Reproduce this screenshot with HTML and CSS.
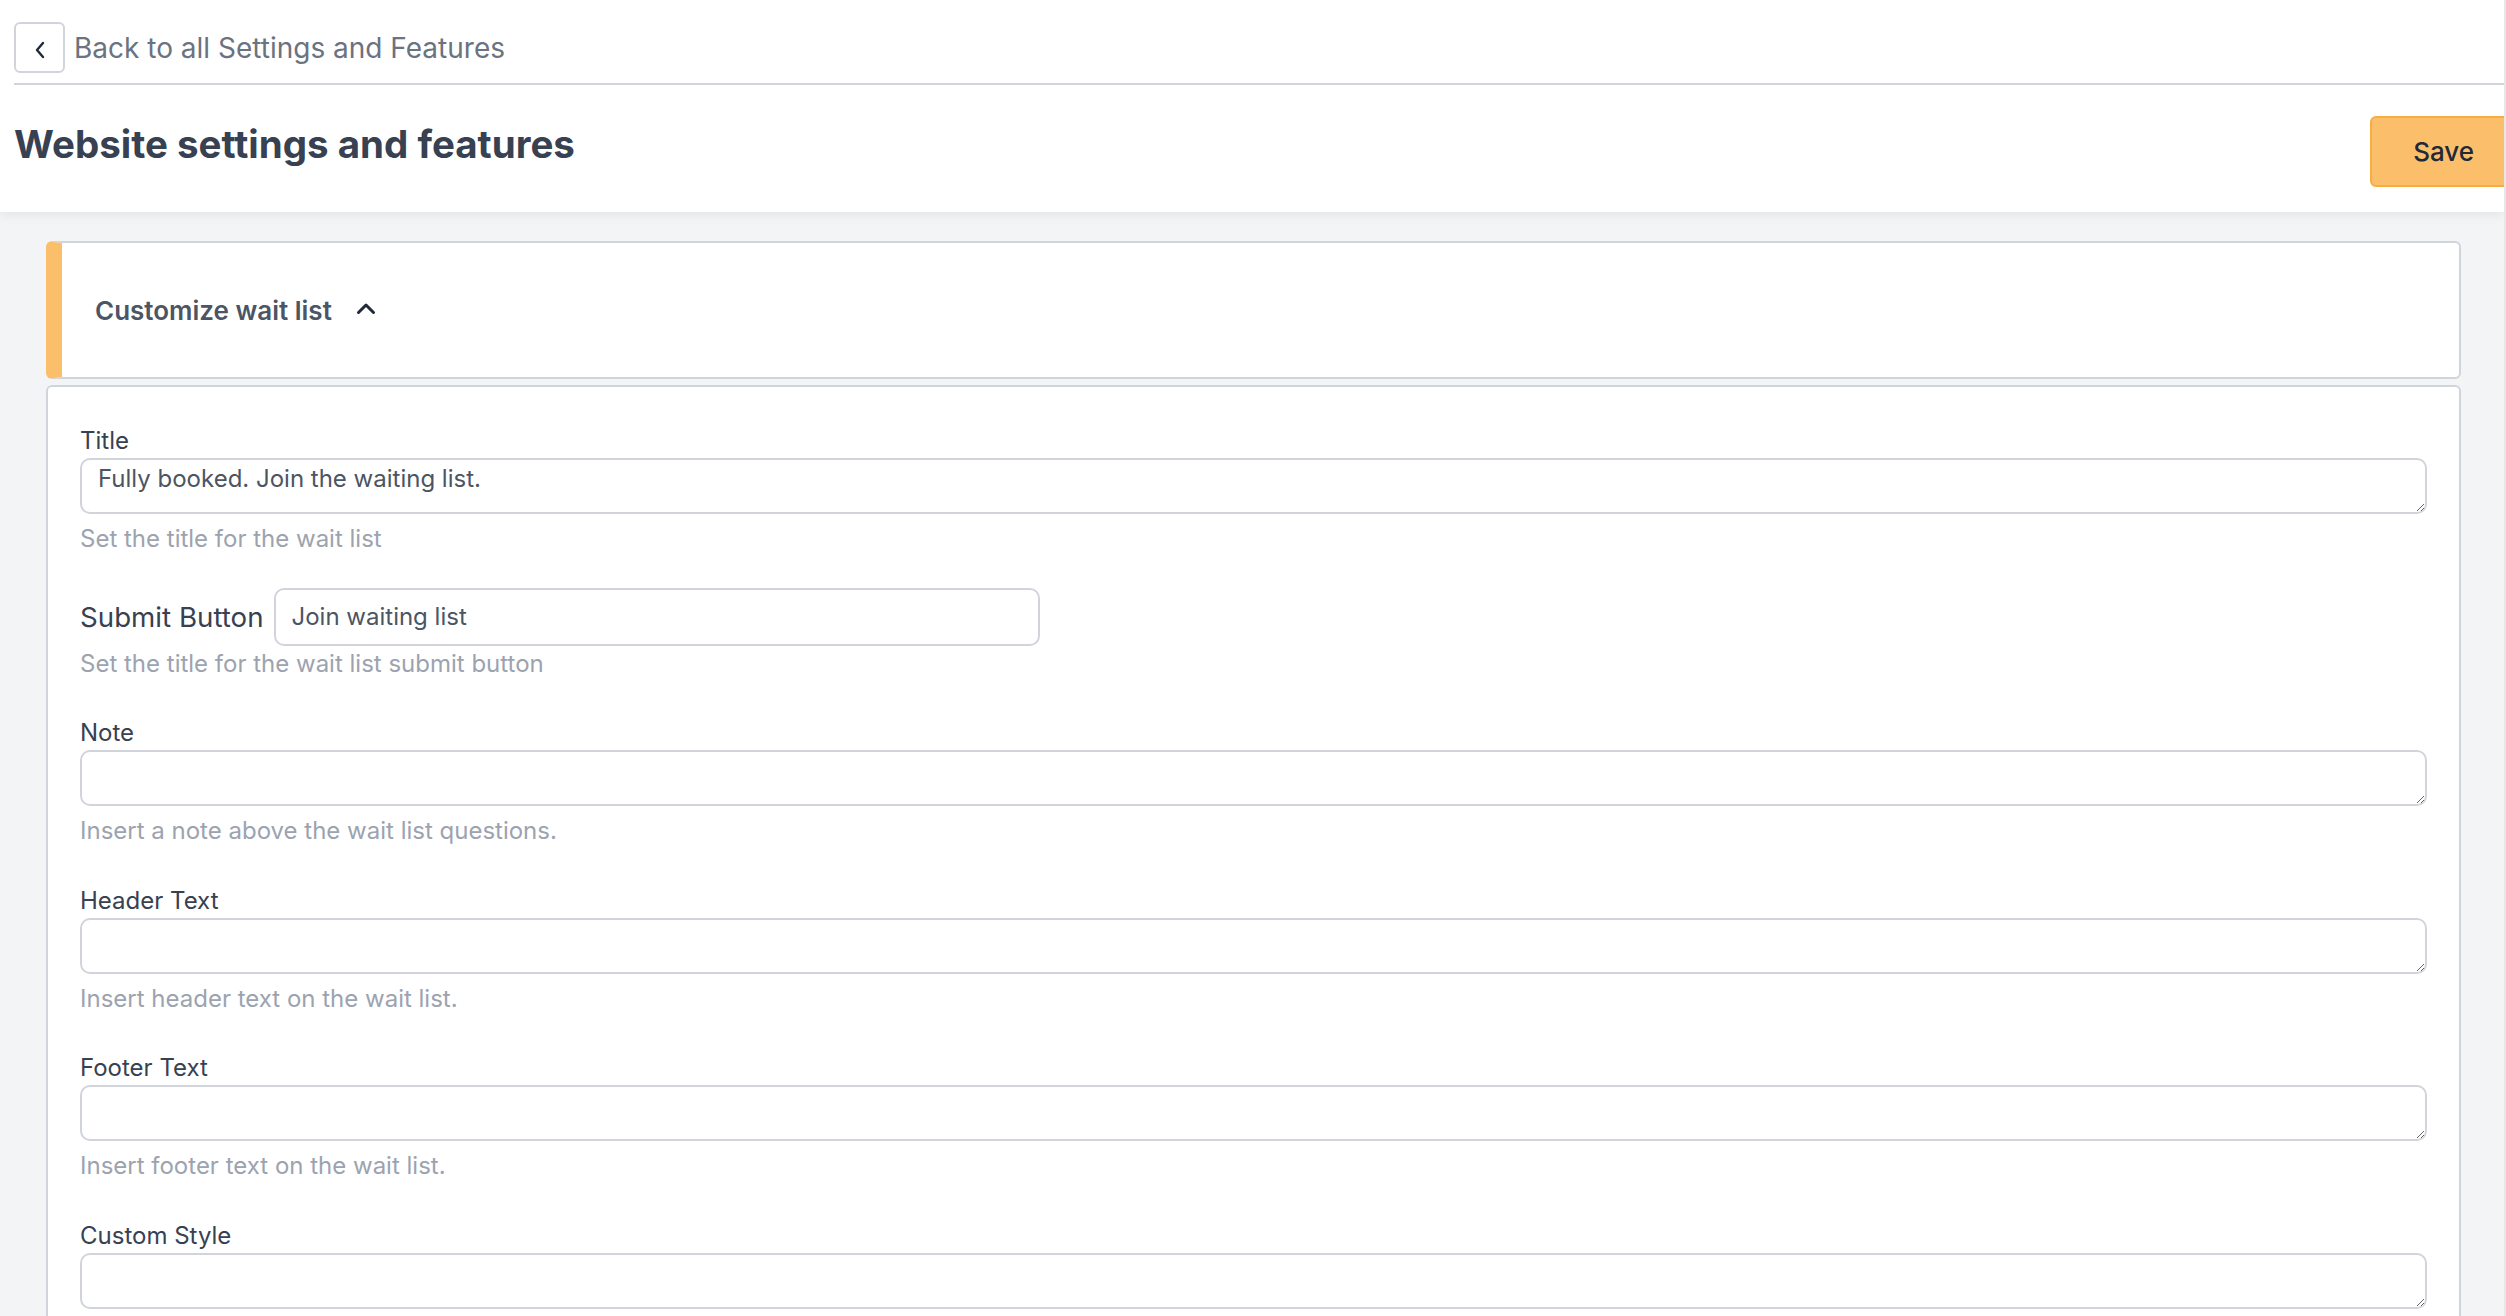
FILE: index.html
```html
<!DOCTYPE html>
<html lang="en">

<head>
  <meta charset="UTF-8">
  <meta name="viewport" content="width=device-width, initial-scale=1.0">
  <link rel="stylesheet" href="styles.css">
  <title>Website settings and features</title>
</head>

<body>
  <header class="topbar">
    <nav class="back-nav">
      <a class="back-btn" href="#">
        <svg width="12" height="18" viewBox="0 0 12 18">
          <path d="M9 2 L3 9 L9 16" fill="none" stroke="#1f2937" stroke-width="2.4" stroke-linecap="round" stroke-linejoin="round" />
        </svg>
      </a>
      <a class="back-link" href="#">Back to all Settings and Features</a>
    </nav>
    <div class="title-row">
      <h1>Website settings and features</h1>
      <button type="button" class="save-btn">Save</button>
    </div>
  </header>

  <main class="content">
    <!-- Wait list panel -->
    <section class="panel">
      <div class="panel-head">
        <h2>Customize wait list</h2>
        <svg width="20" height="13" viewBox="0 0 20 13">
          <path d="M2.5 10.5 L10 3 L17.5 10.5" fill="none" stroke="#1f2937" stroke-width="3" stroke-linecap="round" stroke-linejoin="round" />
        </svg>
      </div>

      <form class="panel-body">
        <div class="field field-tight">
          <label for="wl-title">Title</label>
          <textarea id="wl-title" name="wl-title">Fully booked. Join the waiting list.</textarea>
          <p class="help">Set the title for the wait list</p>
        </div>

        <div class="field">
          <div class="inline-row">
            <label for="wl-submit">Submit Button</label>
            <input type="text" id="wl-submit" name="wl-submit" value="Join waiting list">
          </div>
          <p class="help help-flush">Set the title for the wait list submit button</p>
        </div>

        <div class="field">
          <label for="wl-note">Note</label>
          <textarea id="wl-note" name="wl-note"></textarea>
          <p class="help">Insert a note above the wait list questions.</p>
        </div>

        <div class="field">
          <label for="wl-header">Header Text</label>
          <textarea id="wl-header" name="wl-header"></textarea>
          <p class="help">Insert header text on the wait list.</p>
        </div>

        <div class="field">
          <label for="wl-footer">Footer Text</label>
          <textarea id="wl-footer" name="wl-footer"></textarea>
          <p class="help">Insert footer text on the wait list.</p>
        </div>

        <div class="field">
          <label for="wl-style">Custom Style</label>
          <textarea id="wl-style" name="wl-style"></textarea>
        </div>
      </form>
    </section>
  </main>
</body>

</html>
```

FILE: styles.css
```css
html {
  overflow: hidden;
}

body {
  font-family: "Inter", "Noto Sans", sans-serif;
  background-color: #f3f4f6;
  margin: 0;
  padding: 0;
  border-right: 2px solid #e5e7eb;
}

/* Top header */
.topbar {
  position: relative;
  z-index: 1;
  background-color: #ffffff;
  padding-left: 14px;
  overflow: hidden;
  box-shadow: 0 4px 10px rgba(0, 0, 0, 0.06);
}

.back-nav {
  display: flex;
  align-items: center;
  gap: 9px;
  padding: 22px 0 10px;
  border-bottom: 2px solid #d1d5db;
}

.back-btn {
  width: 51px;
  height: 51px;
  box-sizing: border-box;
  border: 2px solid #d1d5db;
  border-radius: 6px;
  display: flex;
  align-items: center;
  justify-content: center;
}

.back-btn svg {
  margin-top: 5px;
  margin-left: 1px;
}

.back-link {
  font-size: 28px;
  line-height: 34px;
  color: #6b7280;
  text-decoration: none;
}

.title-row {
  display: flex;
  justify-content: space-between;
  align-items: flex-start;
  padding: 31px 0 25px;
}

.title-row h1 {
  margin: 4px 0 0;
  font-size: 38.5px;
  line-height: 48px;
  font-weight: 700;
  color: #374151;
}

.save-btn {
  height: 71px;
  padding: 0 41px;
  margin-right: -13px;
  background-color: #fbbe6b;
  border: 2px solid #f8ad3c;
  border-radius: 6px;
  font-family: inherit;
  font-size: 26px;
  font-weight: 500;
  color: #1f2937;
  cursor: pointer;
}

/* Main area */
.content {
  padding: 29px 43px 0 46px;
}

.panel-head {
  height: 138px;
  box-sizing: border-box;
  display: flex;
  align-items: center;
  gap: 24px;
  padding-left: 33px;
  background-color: #ffffff;
  border: 2px solid #d1d5db;
  border-left: 16px solid #fbbe6b;
  border-radius: 6px;
}

.panel-head h2 {
  margin: 0;
  font-size: 26px;
  font-weight: 600;
  color: #4b5563;
}

.panel-head svg {
  margin-top: -4px;
}

.panel-body {
  margin-top: 6px;
  background-color: #ffffff;
  border: 2px solid #d1d5db;
  border-radius: 6px;
  padding: 36.5px 32px 40px;
}

.field {
  margin-bottom: 34.5px;
}

.field-tight {
  margin-bottom: 31px;
}

.field label {
  display: block;
  font-size: 24px;
  line-height: 34px;
  color: #374151;
}

.field textarea {
  display: block;
  width: 100%;
  height: 56px;
  box-sizing: border-box;
  padding: 4px 16px;
  border: 2px solid #d1d5db;
  border-radius: 10px;
  font-family: inherit;
  font-size: 24px;
  line-height: 30px;
  color: #4b5563;
  resize: vertical;
}

.inline-row {
  display: flex;
  align-items: center;
  gap: 10px;
}

.inline-row label {
  font-size: 27.7px;
}

.inline-row input {
  width: 766px;
  height: 58px;
  box-sizing: border-box;
  padding: 0 16px;
  border: 2px solid #d1d5db;
  border-radius: 10px;
  font-family: inherit;
  font-size: 24px;
  color: #4b5563;
}

.help {
  margin: 7px 0 0;
  font-size: 24px;
  line-height: 36px;
  color: #9ca3af;
}

.help-flush {
  margin-top: 0;
}
```
